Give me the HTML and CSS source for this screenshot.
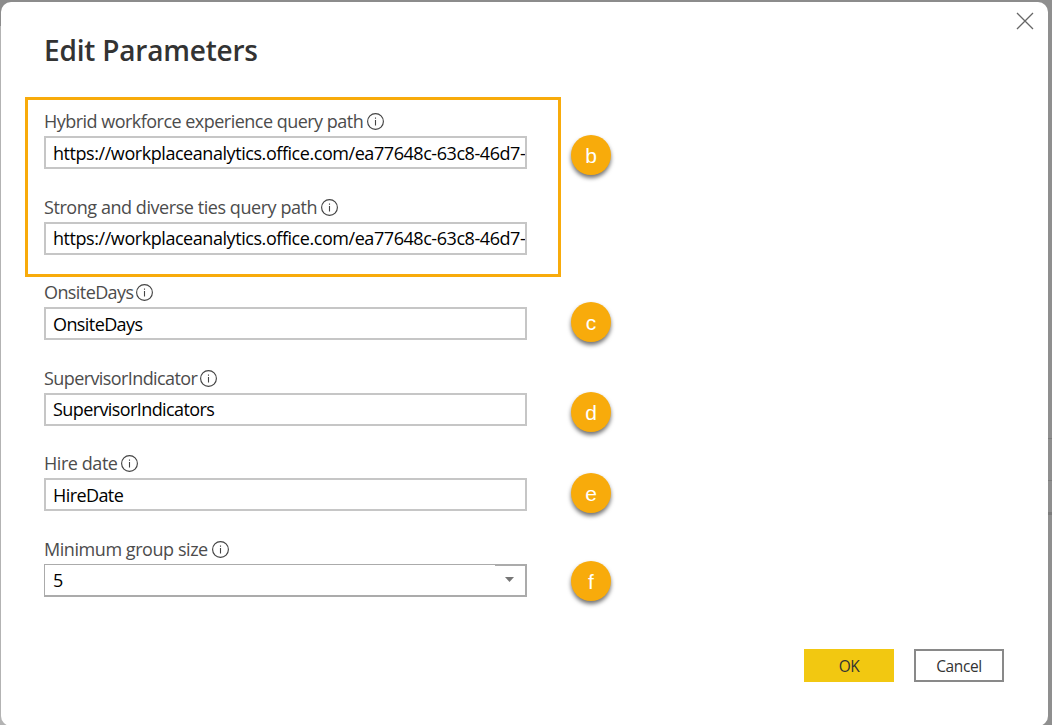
FILE: index.html
```
<!DOCTYPE html>
<html lang="en">
<head>
<meta charset="utf-8">
<title>Edit Parameters</title>
<link rel="stylesheet" href="styles.css">
</head>
<body>
<svg class="symbols" width="0" height="0">
  <symbol id="info" viewBox="0 0 17 17">
    <circle cx="8.5" cy="8.5" r="7.9" fill="none" stroke="#444" stroke-width="1.15"/>
    <path d="M8.5 7v5.5M8.5 4.4v1.3" stroke="#444" stroke-width="1.1" fill="none"/>
  </symbol>
</svg>
<main class="dialog">
  <header class="header">
    <h1 class="title">Edit Parameters</h1>
    <svg class="close" viewBox="0 0 18 18"><path d="M1 1l16 16M17 1L1 17" stroke="#666" stroke-width="1.3" fill="none"/></svg>
  </header>
  <form class="fields">
    <div class="field"><div class="label"><span class="t-hybrid">Hybrid workforce experience query path</span><svg class="info"><use href="#info"/></svg></div><div class="input"><span class="t-url">https://workplaceanalytics.office.com/ea77648c-63c8-46d7-</span></div></div>
    <div class="field"><div class="label"><span class="t-strong">Strong and diverse ties query path</span><svg class="info"><use href="#info"/></svg></div><div class="input"><span class="t-url">https://workplaceanalytics.office.com/ea77648c-63c8-46d7-</span></div></div>
    <div class="field"><div class="label tight"><span class="t-name">OnsiteDays</span><svg class="info"><use href="#info"/></svg></div><div class="input"><span class="t-name">OnsiteDays</span></div></div>
    <div class="field"><div class="label tight"><span class="t-name">SupervisorIndicator</span><svg class="info"><use href="#info"/></svg></div><div class="input"><span class="t-name">SupervisorIndicators</span></div></div>
    <div class="field"><div class="label tight"><span class="t-strong">Hire date</span><svg class="info"><use href="#info"/></svg></div><div class="input"><span class="t-name">HireDate</span></div></div>
    <div class="field"><div class="label"><span class="t-strong">Minimum group size</span><svg class="info"><use href="#info"/></svg></div><div class="input select"><span>5</span><span class="drop"><svg class="arrow" viewBox="0 0 9 5"><path d="M0 0h9L4.5 5z" fill="#767676"/></svg></span></div></div>
  </form>
  <footer class="actions">
    <button class="btn ok">OK</button>
    <button class="btn cancel">Cancel</button>
  </footer>
</main>
<div class="highlight"></div>
<span class="badge badge-b">b</span>
<span class="badge badge-c">c</span>
<span class="badge badge-d">d</span>
<span class="badge badge-e">e</span>
<span class="badge badge-f">f</span>
</body>
</html>
```
FILE: styles.css
```
* { box-sizing: border-box; }
html { height: 100%; overflow: hidden; }
body {
  margin: 0;
  height: 725px;
  padding: 2px 4px 0 1px;
  position: relative;
  overflow: hidden;
  background:
    linear-gradient(to bottom, transparent 438px, #7c7c7c 438px, #7c7c7c 439px, transparent 439px, transparent 480px, #7c7c7c 480px, #7c7c7c 481px, transparent 481px, transparent 512px, #7c7c7c 512px, #7c7c7c 515px, transparent 515px) right / 4px 100% no-repeat,
    linear-gradient(to right, transparent 1040px, #8f8f8f 1040px),
    linear-gradient(#8c8c8c 26px, #b3b3b3 26px);
  font-family: "Open Sans", "Noto Sans", sans-serif;
}
.symbols { display: block; height: 0; }
.dialog {
  display: flex;
  flex-direction: column;
  height: 724px;
  padding: 10px 14px 44px 43px;
  background: #fff;
  border-radius: 10px;
}
.header { display: flex; justify-content: space-between; height: 92px; }
.title {
  margin: 18px 0 0;
  font-size: 28px;
  line-height: 40px;
  font-weight: 600;
  color: #333;
  letter-spacing: -0.2px;
}
.close { width: 18px; height: 18px; }
.fields {
  display: grid;
  grid-auto-rows: 85.6px;
  width: 483px;
}
.label {
  display: flex;
  align-items: center;
  gap: 4px;
  height: 32px;
  padding-top: 3px;
  font-size: 18px;
  line-height: 23px;
  color: #4c4c4c;
  white-space: nowrap;
}
.tight { gap: 3px; }
.info { flex: none; width: 17px; height: 17px; }
.input {
  display: flex;
  align-items: center;
  width: 483px;
  height: 33px;
  padding-left: 7px;
  border: 2px solid #c6c6c6;
  overflow: hidden;
  color: #000;
  font-size: 18px;
  line-height: 24px;
  white-space: nowrap;
}
.select {
  justify-content: space-between;
  align-items: stretch;
  border-color: #ababab;
  border-width: 1px 2px 2px 1px;
  padding-left: 8px;
  line-height: 31px;
}
.drop {
  display: flex;
  width: 30px;
  border-top: 1px solid #ababab;
  padding: 11px 0 0 10px;
}
.arrow { flex: none; width: 9px; height: 5px; }
.t-hybrid { letter-spacing: -0.52px; }
.t-strong { letter-spacing: -0.44px; }
.t-url { letter-spacing: -0.44px; }
.t-name { letter-spacing: -0.59px; }
.actions {
  display: flex;
  justify-content: flex-end;
  gap: 20px;
  margin-top: auto;
  padding-right: 30px;
}
.btn {
  width: 90px;
  height: 33px;
  padding: 0;
  border: 0;
  font: 15.5px/30px "Open Sans", sans-serif;
  letter-spacing: -0.4px;
  color: #333;
}
.ok { background: #f2c811; }
.cancel { background: #fff; border: 2px solid #898989; }
.highlight {
  position: absolute;
  left: 25px;
  top: 97px;
  width: 536px;
  height: 180px;
  border: 3px solid #f8ab0b;
}
.badge {
  position: absolute;
  left: 571px;
  width: 40px;
  height: 40px;
  border-radius: 50%;
  background: #f8ab0b;
  color: #fff;
  font: 21px/41px "Liberation Sans", sans-serif;
  text-align: center;
  box-shadow: 0 3px 4px rgba(0, 0, 0, 0.55);
}
.badge-b { top: 135px; }
.badge-c { top: 302px; }
.badge-d { top: 392px; }
.badge-e { top: 473px; }
.badge-f { top: 561px; }
```
